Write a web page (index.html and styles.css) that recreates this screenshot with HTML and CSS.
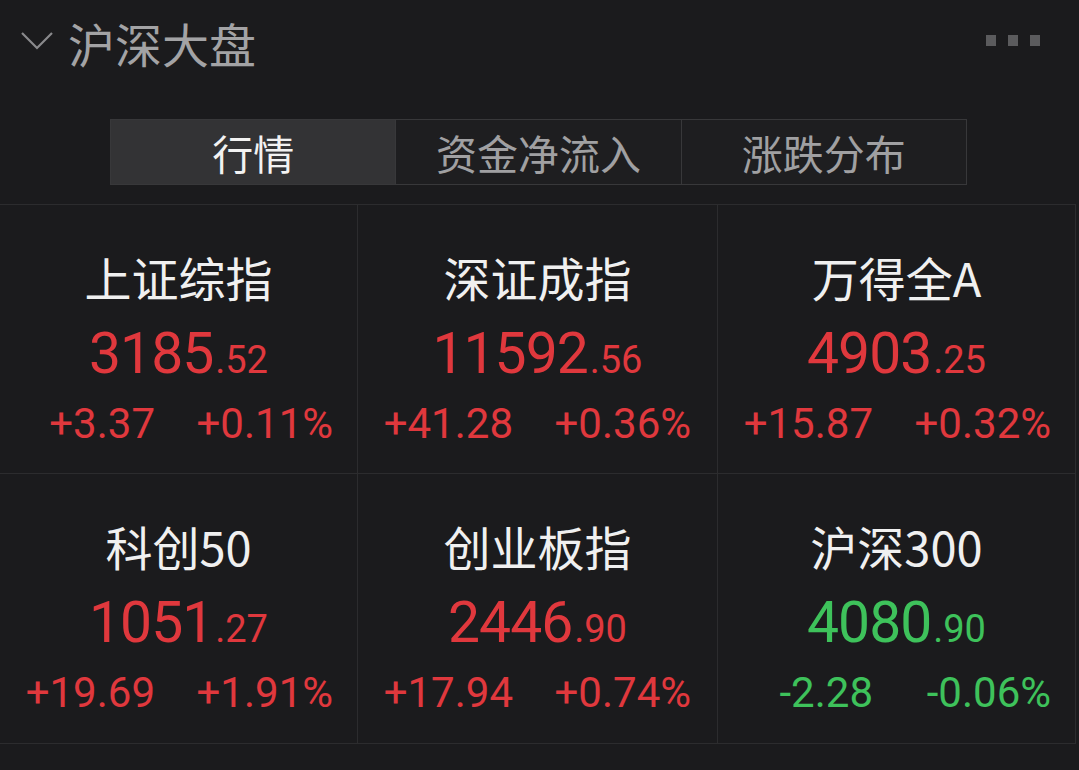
FILE: index.html
```html
<!DOCTYPE html>
<html lang="zh-CN">
<head>
<meta charset="utf-8">
<title>沪深大盘</title>
<link rel="stylesheet" href="styles.css">
</head>
<body>
<div class="page">
  <header class="header">
    <svg class="chevron" width="34" height="20" viewBox="0 0 34 20"><polyline points="2,2 17,17 32,2" fill="none" stroke="#8a8a8c" stroke-width="2.2"/></svg>
    <h1 class="title">沪深大盘</h1>
    <div class="more"><span></span><span></span><span></span></div>
  </header>
  <nav class="tabs">
    <div class="tab active">行情</div>
    <div class="tab">资金净流入</div>
    <div class="tab">涨跌分布</div>
  </nav>
  <section class="grid">
    <div class="cell">
      <div class="name">上证综指</div>
      <div class="value up"><span class="int">3185</span><span class="dec">.52</span></div>
      <div class="change up"><span>+3.37</span><span>+0.11%</span></div>
    </div>
    <div class="cell">
      <div class="name">深证成指</div>
      <div class="value up"><span class="int">11592</span><span class="dec">.56</span></div>
      <div class="change up"><span>+41.28</span><span>+0.36%</span></div>
    </div>
    <div class="cell">
      <div class="name">万得全A</div>
      <div class="value up"><span class="int">4903</span><span class="dec">.25</span></div>
      <div class="change up"><span>+15.87</span><span>+0.32%</span></div>
    </div>
    <div class="cell">
      <div class="name">科创50</div>
      <div class="value up"><span class="int">1051</span><span class="dec">.27</span></div>
      <div class="change up"><span>+19.69</span><span>+1.91%</span></div>
    </div>
    <div class="cell">
      <div class="name">创业板指</div>
      <div class="value up"><span class="int">2446</span><span class="dec">.90</span></div>
      <div class="change up"><span>+17.94</span><span>+0.74%</span></div>
    </div>
    <div class="cell">
      <div class="name">沪深300</div>
      <div class="value down"><span class="int">4080</span><span class="dec">.90</span></div>
      <div class="change down"><span>-2.28</span><span>-0.06%</span></div>
    </div>
  </section>
</div>
</body>
</html>
```

FILE: styles.css
```css
html, body {
  margin: 0;
  padding: 0;
  background: #1b1b1d;
}
.page {
  width: 1079px;
  height: 770px;
  overflow: hidden;
  background: #1b1b1d;
  font-family: Roboto, "Noto Sans CJK SC", sans-serif;
}
.header {
  height: 90px;
  display: flex;
  align-items: center;
  padding-left: 20px;
  padding-right: 39px;
  box-sizing: border-box;
}
.chevron {
  margin-top: -8px;
}
.title {
  margin: -4px 0 0 14px;
  font-family: "Noto Sans CJK SC", sans-serif;
  font-weight: 400;
  font-size: 47px;
  line-height: 60px;
  color: #a3a3a5;
}
.more {
  margin-left: auto;
  display: flex;
  gap: 12px;
  margin-top: -10px;
}
.more span {
  width: 10px;
  height: 11px;
  background: #5b5b5d;
}
.tabs {
  margin: 29px 0 0 110px;
  width: 857px;
  height: 66px;
  display: flex;
  border: 1px solid #38383a;
  box-sizing: border-box;
  background: #1e1e20;
}
.tab {
  flex: 1;
  display: flex;
  align-items: center;
  justify-content: center;
  font-family: "Noto Sans CJK SC", sans-serif;
  font-size: 41px;
  color: #a0a0a2;
  border-left: 1px solid #38383a;
}
.tab:first-child {
  border-left: none;
}
.tab.active {
  background: #333335;
  color: #f2f2f2;
}
.grid {
  margin: 19px 0 0 0;
  width: 1076px;
  display: grid;
  grid-template-columns: 357px 359px 357px;
  grid-template-rows: 268px 269px;
  gap: 1px;
  padding: 1px 1px 1px 0;
  box-sizing: border-box;
  background: #2c2c2e;
}
.cell {
  background: #1b1b1d;
  display: flex;
  flex-direction: column;
  align-items: center;
}
.name {
  margin-top: 47px;
  height: 50px;
  line-height: 50px;
  font-family: "Noto Sans CJK SC", sans-serif;
  font-size: 47px;
  color: #f0f0f0;
}
.value {
  margin-top: 20px;
  height: 64px;
  line-height: 64px;
  white-space: nowrap;
}
.int {
  font-size: 57px;
  letter-spacing: -1px;
}
.dec {
  font-size: 38px;
  margin-left: 2px;
}
.change {
  margin-top: 13px;
  height: 50px;
  line-height: 50px;
  font-size: 42px;
  align-self: stretch;
  display: grid;
  grid-template-columns: 155px 178px;
  white-space: nowrap;
}
.change span {
  text-align: right;
}
.up {
  color: #e0383d;
}
.down {
  color: #3ec25b;
}
```
